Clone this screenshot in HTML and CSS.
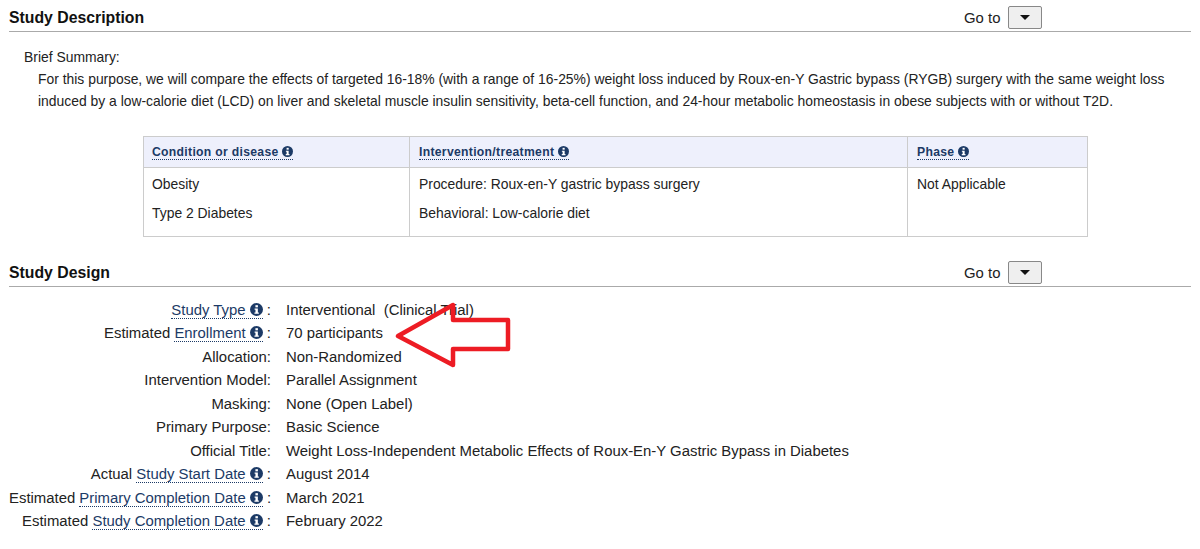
FILE: index.html
```html
<!DOCTYPE html>
<html lang="en">
<head>
    <meta charset="UTF-8">
    <title>Study Description</title>
    <link rel="stylesheet" href="styles.css">
</head>
<body>
    <svg class="icon-defs" width="0" height="0">
        <symbol id="info" viewBox="0 0 24 24">
            <circle cx="12" cy="12" r="12" fill="#1c3a66"/>
            <rect x="10" y="4" width="4.6" height="4" fill="#fff"/>
            <path d="M8.5 10.2h6v7.4h1.8v2.4H8.2v-2.4h1.9v-5H8.5z" fill="#fff"/>
        </symbol>
    </svg>

    <div class="section-head">
        <h2>Study Description</h2>
        <div class="goto">Go to <span class="goto-btn"><span class="caret"></span></span></div>
    </div>

    <div class="summary">
        <div class="summary-label">Brief Summary:</div>
        <p>For this purpose, we will compare the effects of targeted 16-18% (with a range of 16-25%) weight loss induced by Roux-en-Y Gastric bypass (RYGB) surgery with the same weight loss induced by a low-calorie diet (LCD) on liver and skeletal muscle insulin sensitivity, beta-cell function, and 24-hour metabolic homeostasis in obese subjects with or without T2D.</p>
    </div>

    <table class="arms">
        <tr>
            <th class="col-a"><span class="term">Condition or disease <svg class="info"><use href="#info"/></svg></span></th>
            <th class="col-b"><span class="term">Intervention/treatment <svg class="info"><use href="#info"/></svg></span></th>
            <th><span class="term">Phase <svg class="info"><use href="#info"/></svg></span></th>
        </tr>
        <tr>
            <td>
                <div class="cell-line">Obesity</div>
                <div class="cell-line">Type 2 Diabetes</div>
            </td>
            <td>
                <div class="cell-line">Procedure: Roux-en-Y gastric bypass surgery</div>
                <div class="cell-line">Behavioral: Low-calorie diet</div>
            </td>
            <td>
                <div class="cell-line">Not Applicable</div>
            </td>
        </tr>
    </table>

    <div class="section-head design-head">
        <h2>Study Design</h2>
        <div class="goto">Go to <span class="goto-btn"><span class="caret"></span></span></div>
    </div>

    <div class="design">
        <div class="label"><span class="term">Study Type <svg class="info"><use href="#info"/></svg></span> :</div>
        <div>Interventional &nbsp;(Clinical Trial)</div>
        <div class="label">Estimated <span class="term">Enrollment <svg class="info"><use href="#info"/></svg></span> :</div>
        <div>70 participants</div>
        <div class="label">Allocation:</div>
        <div>Non-Randomized</div>
        <div class="label">Intervention Model:</div>
        <div>Parallel Assignment</div>
        <div class="label">Masking:</div>
        <div>None (Open Label)</div>
        <div class="label">Primary Purpose:</div>
        <div>Basic Science</div>
        <div class="label">Official Title:</div>
        <div>Weight Loss-Independent Metabolic Effects of Roux-En-Y Gastric Bypass in Diabetes</div>
        <div class="label">Actual <span class="term">Study Start Date <svg class="info"><use href="#info"/></svg></span> :</div>
        <div>August 2014</div>
        <div class="label">Estimated <span class="term">Primary Completion Date <svg class="info"><use href="#info"/></svg></span> :</div>
        <div>March 2021</div>
        <div class="label">Estimated <span class="term">Study Completion Date <svg class="info"><use href="#info"/></svg></span> :</div>
        <div>February 2022</div>
    </div>

    <svg class="arrow" width="120" height="70" viewBox="0 0 120 70">
        <path d="M3 37 L58 6 V21 H113 V50 H58 V66 Z" fill="none" stroke="#ed1c24" stroke-width="4.5" stroke-linejoin="round"/>
    </svg>
</body>
</html>
```

FILE: styles.css
```css
body {
    font-family: "Liberation Sans", Arial, sans-serif;
    font-size: 14.9px;
    color: #1a1a1a;
    background-color: #fff;
    margin: 0;
    padding: 0 9px;
    height: 549px;
    overflow: hidden;
    position: relative;
}
.icon-defs {
    position: absolute;
}
.section-head {
    display: flex;
    justify-content: space-between;
    align-items: flex-end;
    height: 32px;
    box-sizing: border-box;
    padding-bottom: 2px;
    border-bottom: 1px solid #aaa;
}
.section-head h2 {
    margin: 0 0 2px;
    font-size: 15.8px;
    line-height: 18px;
    font-weight: bold;
    color: #111;
}
.goto {
    display: flex;
    align-items: center;
    gap: 8px;
    width: 227px;
    color: #222;
}
.goto-btn {
    display: flex;
    align-items: center;
    justify-content: center;
    width: 34px;
    height: 23px;
    background-color: #efefef;
    border: 1px solid #888;
    border-radius: 2px;
    box-sizing: border-box;
}
.caret {
    border-left: 5px solid transparent;
    border-right: 5px solid transparent;
    border-top: 5px solid #111;
}
.summary {
    margin: 17px 11px 0 15px;
    font-size: 13.9px;
    color: #222;
}
.summary-label {
    line-height: 16px;
}
.summary p {
    margin: 3px 0 0 14px;
    line-height: 22px;
}
.arms {
    border-collapse: collapse;
    width: 945px;
    margin: 24px 0 0 134px;
    font-size: 13.9px;
    color: #222;
}
.arms th, .arms td {
    border: 1px solid #ccc;
    padding: 0 8px;
    text-align: left;
    vertical-align: top;
}
.arms th + th, .arms td + td {
    padding-left: 9px;
}
.arms th {
    background-color: #eef0fc;
    height: 30px;
    vertical-align: middle;
    font-size: 12.2px;
    letter-spacing: 0.3px;
    color: #1c3a66;
}
.col-a {
    width: 249px;
}
.col-b {
    width: 480px;
}
.arms td {
    height: 69px;
    padding-top: 2px;
    box-sizing: border-box;
}
.cell-line {
    line-height: 29px;
}
.term {
    border-bottom: 1px dotted #1c3a66;
    color: #1c3a66;
}
.info {
    width: 11px;
    height: 11px;
    vertical-align: -1px;
}
.design-head {
    margin-top: 18px;
}
.design {
    display: grid;
    grid-template-columns: 262px 1fr;
    column-gap: 15px;
    margin-top: 12px;
    line-height: 23.45px;
    color: #222;
}
.label {
    text-align: right;
    white-space: nowrap;
}
.label .info {
    width: 13px;
    height: 13px;
    vertical-align: -1px;
}
/* annotation drawn on top of the screenshot */
.arrow {
    position: absolute;
    left: 395px;
    top: 299px;
}
```
